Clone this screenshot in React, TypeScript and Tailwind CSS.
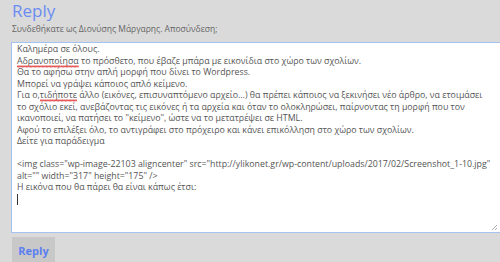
function Misspelled({ children }: { children: React.ReactNode }) {
  return (
    <span className="relative">
      {children}
      <svg className="absolute left-0 top-[10px] h-[3px] w-full" preserveAspectRatio="none">
        <defs>
          <pattern id="wave" width="4" height="3" patternUnits="userSpaceOnUse">
            <path d="M0 2.5L1 0.5L2 2.5L3 0.5L4 2.5" stroke="#e03030" strokeWidth="0.8" fill="none" />
          </pattern>
        </defs>
        <rect width="100%" height="3" fill="url(#wave)" />
      </svg>
    </span>
  );
}

const lines: React.ReactNode[] = [
  "Καλημέρα σε όλους.",
  <>
    <Misspelled>Αδρανοποίησα</Misspelled> το πρόσθετο, που έβαζε μπάρα με εικονίδια στο χώρο των σχολίων.
  </>,
  "Θα το αφήσω στην απλή μορφή που δίνει το Wordpress.",
  "Μπορεί να γράψει κάποιος απλό κείμενο.",
  <>
    Για ο,<Misspelled>τιδήποτε</Misspelled> άλλο (εικόνες, επισυναπτόμενο αρχείο...) θα πρέπει κάποιος να ξεκινήσει νέο άρθρο, να ετοιμάσει
  </>,
  "το σχόλιο εκεί, ανεβάζοντας τις εικόνες ή τα αρχεία και όταν το ολοκληρώσει, παίρνοντας τη μορφή που τον",
  'ικανοποιεί, να πατήσει το "κείμενο", ώστε να το μετατρέψει σε HTML.',
  "Αφού το επιλέξει όλο, το αντιγράφει στο πρόχειρο και κάνει επικόλληση στο χώρο των σχολίων.",
  "Δείτε για παράδειγμα",
  "\u00a0",
  '<img class="wp-image-22103 aligncenter" src="http://ylikonet.gr/wp-content/uploads/2017/02/Screenshot_1-10.jpg"',
  'alt="" width="317" height="175" />',
  "Η εικόνα που θα πάρει θα είναι κάπως έτσι:",
];

export default function App() {
  return (
    <div className="h-[262px] w-[500px] overflow-hidden bg-[#dadada] pl-[11px] font-['Open_Sans',sans-serif]">
      <h3 className="pl-px pt-px text-[17px] leading-[20px] text-[#6b8cf2]">Reply</h3>
      <p className="mt-[2px] pl-px text-[8.5px] leading-[12px] text-[#666]">
        Συνδεθήκατε ως Διονύσης Μάργαρης. Αποσύνδεση;
      </p>
      <div className="relative mt-[7px] h-[191px] w-[500px] border border-[#a6c2f0] bg-white px-[5px] pt-[1px] text-[8.8px] leading-[11.5px] text-[#555]">
        {lines.map((line, i) => (
          <div key={i} className="h-[11.5px] whitespace-pre">
            {line}
          </div>
        ))}
        <div className="h-[11.5px]">
          <span className="inline-block h-[11px] w-px bg-[#333] align-middle" />
        </div>
        <svg className="absolute bottom-[1px] right-[12px]" width="7" height="7" viewBox="0 0 7 7">
          <path d="M6 1L1 6M6 4L4 6" stroke="#999" strokeWidth="0.8" fill="none" />
        </svg>
      </div>
      <button className="mt-[4px] ml-px h-[28px] w-[43px] bg-[#c8c8c8] text-[11px] font-bold text-[#5b7ff0]">
        Reply
      </button>
    </div>
  );
}
